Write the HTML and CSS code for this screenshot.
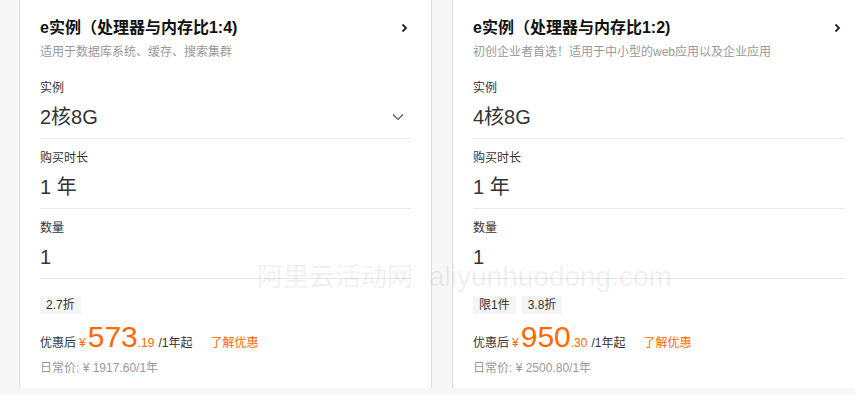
FILE: index.html
```html
<!DOCTYPE html>
<html lang="zh-CN">
<head>
    <meta charset="UTF-8">
    <meta name="viewport" content="width=device-width, initial-scale=1.0">
    <title>e实例</title>
    <link rel="stylesheet" href="styles.css">
</head>
<body>
    <div class="page">
        <!-- 卡片 1 -->
        <div class="card">
            <div class="card-head">
                <span class="card-title">e实例（处理器与内存比1:4)</span>
                <svg class="arrow-right" width="7" height="10" viewBox="0 0 7 10"><polyline points="1.5,1.5 5,5 1.5,8.5" fill="none" stroke="#222" stroke-width="1.8"/></svg>
            </div>
            <div class="card-desc">适用于数据库系统、缓存、搜索集群</div>

            <div class="rows">
                <div class="row">
                    <div class="row-label">实例</div>
                    <div class="row-value">
                        <span>2核8G</span>
                        <svg class="arrow-down" width="12" height="8" viewBox="0 0 12 8"><polyline points="1,1.5 6,6.5 11,1.5" fill="none" stroke="#555" stroke-width="1.2"/></svg>
                    </div>
                </div>
                <div class="row">
                    <div class="row-label">购买时长</div>
                    <div class="row-value"><span>1 年</span></div>
                </div>
                <div class="row">
                    <div class="row-label">数量</div>
                    <div class="row-value"><span>1</span></div>
                </div>
            </div>

            <div class="tags">
                <span class="tag">2.7折</span>
            </div>
            <div class="price">
                <span class="price-pre">优惠后</span>
                <span class="price-cur">¥</span>
                <span class="price-big">573</span>
                <span class="price-dec">.19</span>
                <span class="price-unit">/1年起</span>
                <a class="price-link" href="#">了解优惠</a>
            </div>
            <div class="price-old">日常价: ¥ 1917.60/1年</div>
        </div>

        <!-- 卡片 2 -->
        <div class="card">
            <div class="card-head">
                <span class="card-title">e实例（处理器与内存比1:2)</span>
                <svg class="arrow-right" width="7" height="10" viewBox="0 0 7 10"><polyline points="1.5,1.5 5,5 1.5,8.5" fill="none" stroke="#222" stroke-width="1.8"/></svg>
            </div>
            <div class="card-desc">初创企业者首选！适用于中小型的web应用以及企业应用</div>

            <div class="rows">
                <div class="row">
                    <div class="row-label">实例</div>
                    <div class="row-value"><span>4核8G</span></div>
                </div>
                <div class="row">
                    <div class="row-label">购买时长</div>
                    <div class="row-value"><span>1 年</span></div>
                </div>
                <div class="row">
                    <div class="row-label">数量</div>
                    <div class="row-value"><span>1</span></div>
                </div>
            </div>

            <div class="tags">
                <span class="tag">限1件</span>
                <span class="tag">3.8折</span>
            </div>
            <div class="price">
                <span class="price-pre">优惠后</span>
                <span class="price-cur">¥</span>
                <span class="price-big">950</span>
                <span class="price-dec">.30</span>
                <span class="price-unit">/1年起</span>
                <a class="price-link" href="#">了解优惠</a>
            </div>
            <div class="price-old">日常价: ¥ 2500.80/1年</div>
        </div>
    </div>

    <!-- 水印 -->
    <div class="watermark">阿里云活动网<span class="watermark-url">aliyunhuodong.com</span></div>
</body>
</html>
```

FILE: styles.css
```css
body {
    margin: 0;
    padding: 0;
    background-color: #f7f7f7;
    font-family: "Liberation Sans", Arial, "Noto Sans CJK SC", sans-serif;
    color: #333;
    overflow: hidden;
}
.page {
    display: flex;
    gap: 20px;
    padding-left: 19px;
    width: 836px;
}
/* 卡片 */
.card {
    flex: 0 0 413px;
    box-sizing: border-box;
    background-color: #fff;
    border-left: 1px solid #dcdcdc;
    border-right: 1px solid #dcdcdc;
    padding: 16px 20px 11px;
}
.card-head {
    display: flex;
    justify-content: space-between;
    align-items: center;
    height: 24px;
}
.card-title {
    font-size: 16px;
    font-weight: bold;
    color: #111;
    line-height: 24px;
}
.arrow-right {
    margin-right: 3px;
}
.card-desc {
    margin-top: 3px;
    font-size: 12px;
    line-height: 18px;
    color: #999;
}
/* 选项行 */
.rows {
    margin-top: 8px;
}
.row {
    padding: 9px 0 7px;
    border-bottom: 1px solid #e8e8e8;
}
.row-label {
    font-size: 12px;
    line-height: 20px;
    color: #333;
}
.row-value {
    display: flex;
    justify-content: space-between;
    align-items: center;
    margin-top: 5px;
    font-size: 20px;
    line-height: 28px;
    color: #333;
}
.arrow-down {
    margin-right: 7px;
}
/* 标签 */
.tags {
    display: flex;
    gap: 6px;
    margin-top: 17px;
}
.tag {
    background-color: #f5f5f5;
    font-size: 12px;
    line-height: 18px;
    padding: 0 6px;
    color: #333;
}
/* 价格 */
.price {
    display: flex;
    align-items: baseline;
    margin-top: 8px;
    font-size: 12px;
    line-height: 16px;
    color: #333;
}
.price-cur {
    color: #ff6a00;
    margin-left: 3px;
}
.price-big {
    color: #ff6a00;
    font-size: 30px;
    line-height: 30px;
    margin-left: 2px;
}
.price-dec {
    color: #ff6a00;
}
.price-unit {
    margin-left: 4px;
}
.price-link {
    margin-left: 18px;
    color: #ff6a00;
    text-decoration: none;
}
.price-old {
    margin-top: 7px;
    font-size: 12px;
    line-height: 18px;
    color: #999;
}
/* 水印 */
.watermark {
    position: absolute;
    left: 257px;
    top: 261px;
    font-size: 26px;
    line-height: 32px;
    color: rgba(0, 0, 0, 0.07);
    white-space: nowrap;
    pointer-events: none;
}
.watermark-url {
    font-size: 28px;
    margin-left: 16px;
}
```
